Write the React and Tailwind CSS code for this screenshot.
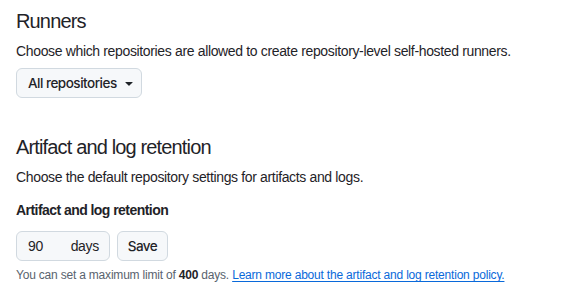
export default function App() {
  return (
    <div
      className="min-h-screen bg-white px-4 pt-[9px] text-[#1f2328]"
      style={{ fontFamily: '"Liberation Sans", Arial, sans-serif' }}
    >
      <h2 className="text-[20px] leading-[24px] font-normal tracking-[-0.85px]">Runners</h2>
      <p className="mt-[8px] text-[14px] leading-[20px] tracking-[-0.35px]">
        Choose which repositories are allowed to create repository-level self-hosted runners.
      </p>
      <button className="mt-[7px] flex h-[30px] w-[126px] items-center gap-[4px] rounded-md border border-[#d1d9e0] bg-[#f6f8fa] pl-[11px] font-['Inter'] text-[13.5px] font-medium tracking-[-0.5px]">
        All repositories
        <svg width="16" height="16" viewBox="0 0 16 16" fill="currentColor">
          <path d="m4.427 7.427 3.396 3.396a.25.25 0 0 0 .354 0l3.396-3.396A.25.25 0 0 0 11.396 7H4.604a.25.25 0 0 0-.177.427Z" />
        </svg>
      </button>

      <h2 className="mt-[37px] text-[20px] leading-[24px] font-normal tracking-[-0.85px]">
        Artifact and log retention
      </h2>
      <p className="mt-[8px] text-[14px] leading-[20px] tracking-[-0.35px]">
        Choose the default repository settings for artifacts and logs.
      </p>
      <div className="mt-[13px] text-[14px] leading-[20px] font-semibold tracking-[-0.55px]">
        Artifact and log retention
      </div>
      <div className="mt-[11px] flex gap-[7px]">
        <div className="flex h-[30px] w-[94px] items-center justify-between rounded-md border border-[#d1d9e0] bg-[#f6f8fa] pl-[11px] pr-[10px] text-[14px] tracking-[-0.3px]">
          <span>90</span>
          <span>days</span>
        </div>
        <button className="h-[30px] w-[51px] rounded-md border border-[#d1d9e0] bg-[#f6f8fa] font-['Inter'] text-[13.5px] font-medium tracking-[-0.5px]">
          Save
        </button>
      </div>
      <p className="mt-[5px] text-[12px] leading-[18px] tracking-[-0.2px] text-[#59636e]">
        You can set a maximum limit of <span className="font-semibold text-[#1f2328]">400</span> days.{" "}
        <a href="#" className="text-[#0969da] underline underline-offset-2">
          Learn more about the artifact and log retention policy.
        </a>
      </p>
    </div>
  );
}
